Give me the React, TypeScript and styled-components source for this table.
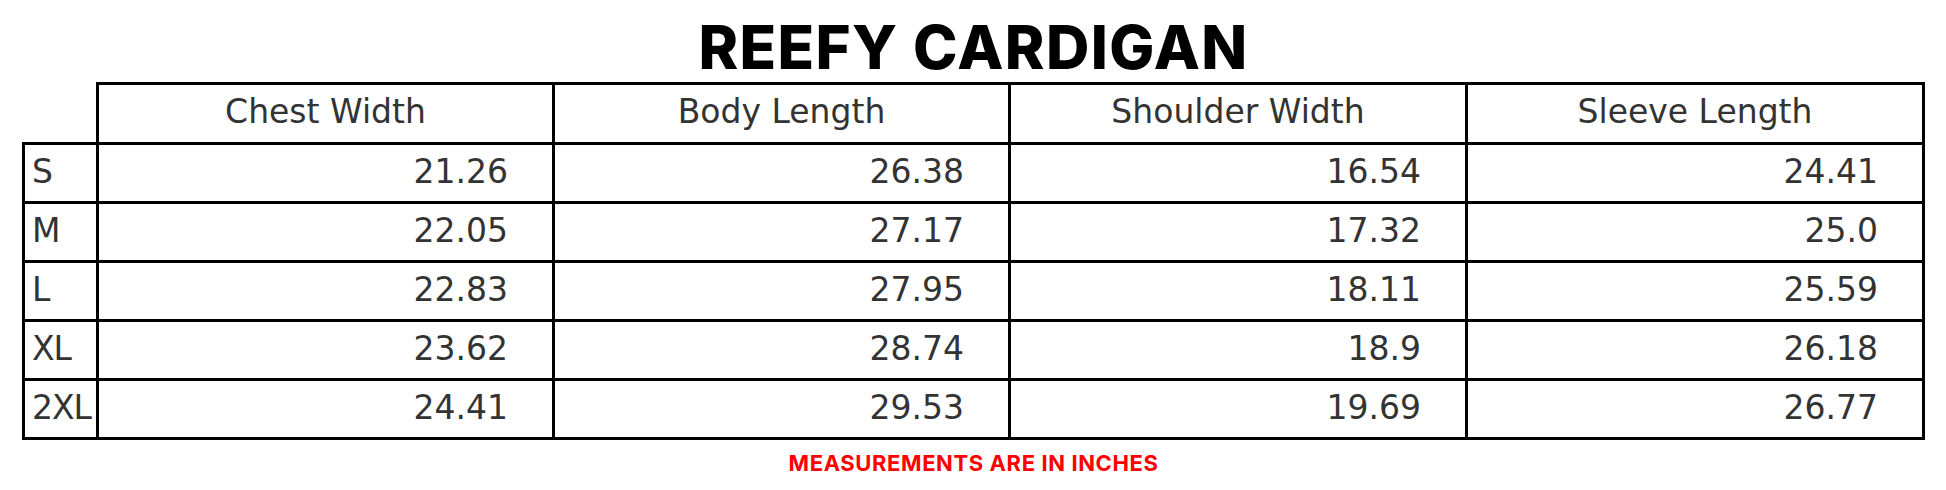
import React from "react";
import styled, { createGlobalStyle } from "styled-components";

const GlobalStyle = createGlobalStyle`
    html, body {
        margin: 0;
        padding: 0;
        background: #ffffff;
    }
`;

const Page = styled.div`
    width: 1946px;
    padding: 17px 21px 0 22px;
    box-sizing: border-box;
    display: flex;
    flex-direction: column;
    align-items: stretch;
`;

const Title = styled.h1`
    margin: 0 0 5px;
    font-family: Inter, "Liberation Sans", sans-serif;
    font-weight: 800;
    font-size: 60px;
    line-height: 1;
    letter-spacing: 1.4px;
    text-align: center;
    color: #000000;
`;

const Table = styled.table`
    width: 1903px;
    border-collapse: collapse;
    table-layout: fixed;
    font-family: "DejaVu Sans", Verdana, sans-serif;
    font-size: 33px;
    color: #333333;
`;

const Col = styled.col<{ $width: number }>`
    width: ${({ $width }) => $width}px;
`;

const HeadCell = styled.th<{ $empty?: boolean }>`
    border: ${({ $empty }) => ($empty ? "none" : "3px solid #000")};
    font-weight: 400;
    text-align: center;
    padding: 0 0 4px;
    height: 53px;
`;

const SizeCell = styled.td`
    border: 3px solid #000;
    text-align: left;
    padding: 0 0 4px 7px;
    height: 52px;
    white-space: nowrap;
    letter-spacing: -1px;
`;

const ValueCell = styled.td`
    border: 3px solid #000;
    text-align: right;
    padding: 0 44px 4px 0;
    height: 52px;
`;

const Note = styled.p`
    margin: 12px 0 0;
    font-family: Inter, "Liberation Sans", sans-serif;
    font-weight: 700;
    font-size: 22px;
    line-height: 1;
    letter-spacing: 0.6px;
    text-align: center;
    color: #ff0000;
`;

const columns = ["Chest Width", "Body Length", "Shoulder Width", "Sleeve Length"];
const widths = [74, 456, 456, 457, 457];

const rows: [string, string[]][] = [
    ["S", ["21.26", "26.38", "16.54", "24.41"]],
    ["M", ["22.05", "27.17", "17.32", "25.0"]],
    ["L", ["22.83", "27.95", "18.11", "25.59"]],
    ["XL", ["23.62", "28.74", "18.9", "26.18"]],
    ["2XL", ["24.41", "29.53", "19.69", "26.77"]],
];

const App: React.FC = () => {
    return (
        <Page>
            <GlobalStyle />
            <Title>REEFY CARDIGAN</Title>
            <Table>
                <colgroup>
                    {widths.map((w, i) => (
                        <Col key={i} $width={w} />
                    ))}
                </colgroup>
                <thead>
                    <tr>
                        <HeadCell $empty />
                        {columns.map((c) => (
                            <HeadCell key={c}>{c}</HeadCell>
                        ))}
                    </tr>
                </thead>
                <tbody>
                    {rows.map(([size, values]) => (
                        <tr key={size}>
                            <SizeCell>{size}</SizeCell>
                            {values.map((v, i) => (
                                <ValueCell key={i}>{v}</ValueCell>
                            ))}
                        </tr>
                    ))}
                </tbody>
            </Table>
            <Note>MEASUREMENTS ARE IN INCHES</Note>
        </Page>
    );
};

export default App;
